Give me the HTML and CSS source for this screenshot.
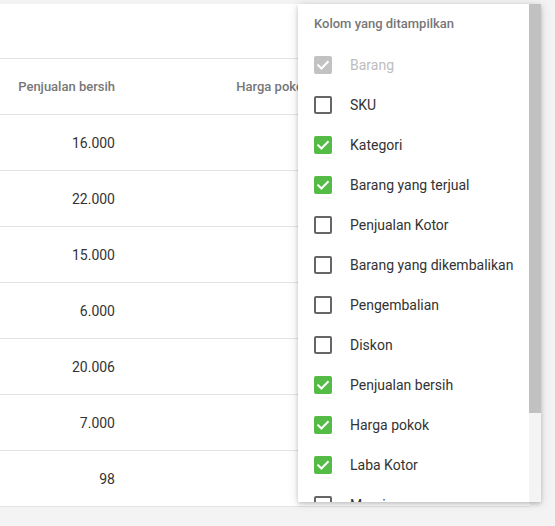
FILE: index.html
```html
<!DOCTYPE html>
<html lang="id">
<head>
<meta charset="utf-8">
<title>Laporan</title>
<link rel="stylesheet" href="styles.css">
</head>
<body>
<div class="page">
  <div class="card">
    <div class="toolbar"></div>
    <div class="table">
      <div class="row head">
        <div class="cell">Penjualan bersih</div>
        <div class="cell wide">Harga pokok penjualan</div>
      </div>
      <div class="row"><div class="cell">16.000</div><div class="cell wide"></div></div>
      <div class="row"><div class="cell">22.000</div><div class="cell wide"></div></div>
      <div class="row"><div class="cell">15.000</div><div class="cell wide"></div></div>
      <div class="row"><div class="cell">6.000</div><div class="cell wide"></div></div>
      <div class="row"><div class="cell">20.006</div><div class="cell wide"></div></div>
      <div class="row"><div class="cell">7.000</div><div class="cell wide"></div></div>
      <div class="row"><div class="cell">98</div><div class="cell wide"></div></div>
    </div>
  </div>

  <div class="menu">
    <div class="menu-body">
      <div class="menu-title">Kolom yang ditampilkan</div>
      <ul class="options">
        <li class="opt disabled"><span class="box checked"><svg viewBox="0 0 18 18"><path d="M4.2 9.3l3.2 3.2 6.4-6.6"/></svg></span>Barang</li>
        <li class="opt"><span class="box"></span>SKU</li>
        <li class="opt"><span class="box checked"><svg viewBox="0 0 18 18"><path d="M4.2 9.3l3.2 3.2 6.4-6.6"/></svg></span>Kategori</li>
        <li class="opt"><span class="box checked"><svg viewBox="0 0 18 18"><path d="M4.2 9.3l3.2 3.2 6.4-6.6"/></svg></span>Barang yang terjual</li>
        <li class="opt"><span class="box"></span>Penjualan Kotor</li>
        <li class="opt"><span class="box"></span>Barang yang dikembalikan</li>
        <li class="opt"><span class="box"></span>Pengembalian</li>
        <li class="opt"><span class="box"></span>Diskon</li>
        <li class="opt"><span class="box checked"><svg viewBox="0 0 18 18"><path d="M4.2 9.3l3.2 3.2 6.4-6.6"/></svg></span>Penjualan bersih</li>
        <li class="opt"><span class="box checked"><svg viewBox="0 0 18 18"><path d="M4.2 9.3l3.2 3.2 6.4-6.6"/></svg></span>Harga pokok</li>
        <li class="opt"><span class="box checked"><svg viewBox="0 0 18 18"><path d="M4.2 9.3l3.2 3.2 6.4-6.6"/></svg></span>Laba Kotor</li>
        <li class="opt"><span class="box"></span>Margin</li>
      </ul>
    </div>
    <div class="scrollbar"><div class="thumb"></div></div>
  </div>
</div>
</body>
</html>
```

FILE: styles.css
```css
* { box-sizing: border-box; }
html, body { margin: 0; padding: 0; }
body {
  background: #f3f3f3;
  font-family: Roboto, "Liberation Sans", Arial, sans-serif;
  color: #333;
  width: 555px;
  height: 526px;
  overflow: hidden;
}
.page {
  position: relative;
  padding-top: 4px;
  height: 526px;
}
.card {
  width: 530px;
  background: #fff;
}
.toolbar {
  height: 55px;
  border-bottom: 1px solid #e3e3e3;
}
.row {
  display: grid;
  grid-template-columns: 115px 255px;
  height: 56px;
  border-bottom: 1px solid #e3e3e3;
  align-items: center;
  font-size: 14px;
}
.cell {
  text-align: right;
  white-space: nowrap;
  line-height: 20px;
}
.row.head {
  font-size: 13px;
  font-weight: 500;
  color: #777;
}
.menu {
  position: absolute;
  left: 298px;
  top: 4px;
  width: 243px;
  height: 498px;
  background: #fff;
  display: flex;
  box-shadow: 0 2px 4px rgba(0,0,0,0.18), 0 1px 10px rgba(0,0,0,0.12);
}
.menu-body {
  flex: 1;
  overflow: hidden;
}
.scrollbar {
  flex: none;
  width: 12px;
  background: #f4f4f4;
}
.thumb {
  height: 409px;
  background: #c1c1c1;
}
.menu-title {
  padding: 12px 16px 13px;
  font-size: 13px;
  line-height: 16px;
  font-weight: 500;
  color: #777;
}
.options {
  list-style: none;
  margin: 0;
  padding: 0;
}
.opt {
  display: flex;
  align-items: center;
  gap: 18px;
  height: 40px;
  padding-left: 16px;
  font-size: 14px;
  color: #333;
  white-space: nowrap;
}
.box {
  flex: none;
  width: 18px;
  height: 18px;
  border: 2px solid #666;
  border-radius: 2px;
  display: flex;
  align-items: center;
  justify-content: center;
}
.box.checked {
  background: #53bb46;
  border: none;
}
.box svg {
  width: 18px;
  height: 18px;
  fill: none;
  stroke: #fff;
  stroke-width: 2;
  stroke-linecap: square;
}
.opt.disabled { color: #bdbdbd; }
.opt.disabled .box.checked { background: #c2c2c2; }
```
